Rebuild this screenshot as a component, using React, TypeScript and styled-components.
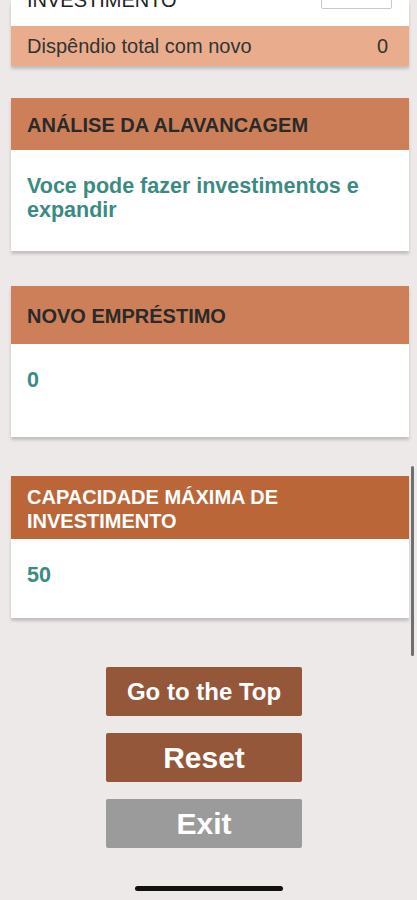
import { FC } from "react";
import styled, { createGlobalStyle } from "styled-components";

const GlobalStyle = createGlobalStyle`
  html, body {
    margin: 0;
    padding: 0;
    background: #ece9e8;
    font-family: "Liberation Sans", Arial, sans-serif;
  }
  * { box-sizing: border-box; }
`;

const Screen = styled("div")`
  position: relative;
  width: 417px;
  height: 900px;
  overflow: hidden;
  background: #ece9e8;
`;

const Content = styled("div")`
  display: flex;
  flex-direction: column;
  padding: 0 8px 0 11px;
`;

const Card = styled("section")<{ $gap: number }>`
  margin-top: ${({ $gap }) => $gap}px;
  background: #ffffff;
  box-shadow: 0 3px 3px rgba(0, 0, 0, 0.18);
`;

const InputRow = styled("div")`
  display: flex;
  align-items: center;
  justify-content: space-between;
  height: 52px;
  margin-top: -26px;
  padding: 0 17px 0 16px;
`;

const InputLabel = styled("span")`
  font-size: 20px;
  color: #222;
  text-transform: uppercase;
`;

const InputBox = styled("div")`
  width: 71px;
  height: 30px;
  margin-top: -12px;
  border: 1px solid #c9c9c9;
  border-radius: 2px;
  background: #fff;
`;

const TotalRow = styled("div")`
  display: flex;
  align-items: center;
  justify-content: space-between;
  height: 40px;
  padding: 0 21px 0 16px;
  background: #e9ad8e;
  font-size: 20px;
  color: #333;
`;

const Header = styled("div")<{ $h: number; $dark?: boolean }>`
  display: flex;
  align-items: center;
  min-height: ${({ $h }) => $h}px;
  padding: 2px 16px 0;
  background: ${({ $dark }) => ($dark ? "#ba6638" : "#cd7f59")};
  color: ${({ $dark }) => ($dark ? "#ffffff" : "#2a2a2a")};
  font-size: 20px;
  font-weight: 700;
  line-height: 24px;
  text-transform: uppercase;
`;

const Body = styled("div")<{ $h: number }>`
  height: ${({ $h }) => $h}px;
  padding: 24px 16px 0;
  color: #3b8b83;
  font-size: 21.5px;
  font-weight: 700;
  line-height: 24px;
`;

const Buttons = styled("div")`
  display: flex;
  flex-direction: column;
  align-items: flex-start;
  gap: 17px;
  margin-top: 49px;
  padding-left: 95px;
`;

const Button = styled("button")<{ $grey?: boolean; $big?: boolean }>`
  width: 196px;
  height: 49px;
  border: none;
  border-radius: 2px;
  background: ${({ $grey }) => ($grey ? "#9b9b9b" : "#95573a")};
  color: #ffffff;
  font-family: "Liberation Sans", Arial, sans-serif;
  font-size: ${({ $big }) => ($big ? "30px" : "24px")};
  font-weight: 700;
  cursor: pointer;
`;

const HomeBar = styled("div")`
  position: absolute;
  left: 135px;
  bottom: 9px;
  width: 148px;
  height: 5px;
  border-radius: 3px;
  background: #111;
`;

const ScrollThumb = styled("div")`
  position: absolute;
  right: 3px;
  top: 466px;
  width: 3px;
  height: 190px;
  border-radius: 2px;
  background: #6f6f6f;
`;

type Panel = { title: string; value: string; gap: number; head: number; body: number; dark?: boolean };

const panels: Panel[] = [
  { title: "Análise da alavancagem", value: "Voce pode fazer investimentos e expandir", gap: 32, head: 52, body: 101 },
  { title: "Novo empréstimo", value: "0", gap: 35, head: 58, body: 93 },
  { title: "Capacidade máxima de investimento", value: "50", gap: 39, head: 63, body: 79, dark: true },
];

const App: FC = () => {
  return (
    <Screen>
      <GlobalStyle />
      <Content>
        <Card $gap={0}>
          <InputRow>
            <InputLabel>Investimento</InputLabel>
            <InputBox />
          </InputRow>
          <TotalRow>
            <span>Dispêndio total com novo</span>
            <span>0</span>
          </TotalRow>
        </Card>
        {panels.map((p) => (
          <Card key={p.title} $gap={p.gap}>
            <Header $h={p.head} $dark={p.dark}>
              {p.title}
            </Header>
            <Body $h={p.body}>{p.value}</Body>
          </Card>
        ))}
        <Buttons>
          <Button>Go to the Top</Button>
          <Button $big>Reset</Button>
          <Button $big $grey>
            Exit
          </Button>
        </Buttons>
      </Content>
      <ScrollThumb />
      <HomeBar />
    </Screen>
  );
};

export default App;
